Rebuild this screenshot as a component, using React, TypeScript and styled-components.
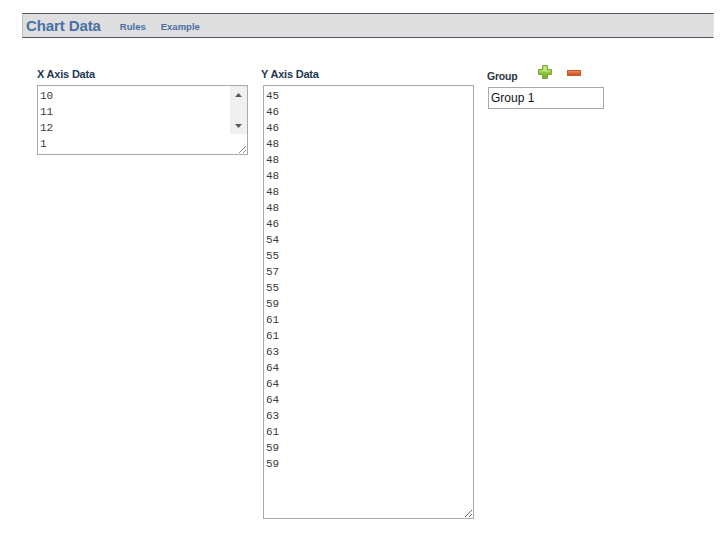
import React from "react";
import styled, { createGlobalStyle } from "styled-components";

const Global = createGlobalStyle`
  html, body { margin: 0; padding: 0; background: #ffffff; }
  body { font-family: "Liberation Sans", Arial, sans-serif; }
`;

const Page = styled.div`
  padding: 13px 6px 0 22px;
`;

const Header = styled.div`
  display: flex;
  align-items: center;
  height: 23px;
  background: #dedede;
  border-top: 1px solid #4b5a66;
  border-bottom: 1px solid #4b5a66;
  border-left: 1px solid #b7bec4;
  border-right: 1px solid #e6e6e6;
  padding-left: 3px;
`;

const Title = styled.span`
  font-size: 15px;
  font-weight: bold;
  color: #4a70a8;
  letter-spacing: -0.1px;
  margin-right: 19px;
`;

const NavLink = styled.a`
  font-size: 9.5px;
  font-weight: bold;
  color: #4a6ea6;
  text-decoration: none;
  margin-right: 15px;
  margin-top: 2px;
  cursor: pointer;
`;

const Columns = styled.div`
  display: flex;
  align-items: flex-start;
  padding-left: 15px;
  margin-top: 29px;
`;

const Column = styled.div<{ $width: number; $shift?: number }>`
  display: flex;
  flex-direction: column;
  width: ${(p) => p.$width}px;
  margin-top: ${(p) => p.$shift ?? 0}px;
`;

const Label = styled.div`
  font-size: 11px;
  font-weight: bold;
  color: #1e3853;
  line-height: 14px;
  height: 14px;
  margin-bottom: 4px;
  letter-spacing: -0.2px;
`;

const DataArea = styled.textarea<{ $height: number; $indent?: number }>`
  box-sizing: border-box;
  width: 211px;
  height: ${(p) => p.$height}px;
  margin: 0 0 0 ${(p) => p.$indent ?? 0}px;
  padding: 2px 2px;
  border: 1px solid #a9a9a9;
  font-family: "Liberation Mono", "Courier New", monospace;
  font-size: 11px;
  line-height: 16px;
  color: #3a3a3a;
  overflow-y: auto;
  resize: both;
  outline: none;
  background: #ffffff;
`;

/* framed textarea with a classic scrollbar rail drawn beside it */
const ScrollFrame = styled.div<{ $height: number }>`
  box-sizing: border-box;
  display: flex;
  width: 211px;
  height: ${(p) => p.$height}px;
  border: 1px solid #a9a9a9;
  background: #ffffff;
`;

const FrameText = styled.textarea`
  flex: 1;
  min-width: 0;
  box-sizing: border-box;
  margin: 0;
  padding: 2px 2px;
  border: 0;
  font-family: "Liberation Mono", "Courier New", monospace;
  font-size: 11px;
  line-height: 16px;
  color: #3a3a3a;
  overflow: hidden;
  resize: none;
  outline: none;
  background: transparent;
`;

const Rail = styled.div`
  display: flex;
  flex-direction: column;
  width: 17px;
`;

const RailButton = styled.div`
  display: flex;
  align-items: center;
  justify-content: center;
  height: 17px;
  background: #f0f0f0;
`;

const RailTrack = styled.div`
  height: 14px;
  background: #f0f0f0;
`;

const RailCorner = styled.div`
  flex: 1;
  display: flex;
  align-items: flex-end;
  justify-content: flex-end;
  background: #ffffff;
  padding: 0 1px 1px 0;
`;

const GroupHead = styled.div`
  display: flex;
  align-items: flex-start;
  height: 20px;
`;

const GroupLabel = styled.div`
  font-size: 10.5px;
  font-weight: bold;
  color: #2b3440;
  line-height: 14px;
  margin-top: 4px;
  letter-spacing: -0.2px;
`;

const IconButton = styled.button<{ $left: number; $top: number }>`
  display: block;
  padding: 0;
  border: 0;
  background: transparent;
  margin-left: ${(p) => p.$left}px;
  margin-top: ${(p) => p.$top}px;
  line-height: 0;
  cursor: pointer;
`;

const GroupInput = styled.input`
  box-sizing: border-box;
  width: 116px;
  height: 22px;
  margin: 2px 0 0 1px;
  padding: 0 2px;
  border: 1px solid #a9a9a9;
  font-family: "Liberation Sans", Arial, sans-serif;
  font-size: 12px;
  color: #111111;
  outline: none;
`;

const Arrow = ({ up }: { up?: boolean }) => (
  <svg width="7" height="4" viewBox="0 0 7 4">
    <path d={up ? "M0 4 L3.5 0 L7 4 Z" : "M0 0 L3.5 4 L7 0 Z"} fill="#5a5a5a" />
  </svg>
);

const Grip = () => (
  <svg width="8" height="8" viewBox="0 0 8 8">
    <path d="M8 1 L1 8 M8 5 L5 8" stroke="#8a8a8a" strokeWidth="1" />
  </svg>
);

const PlusIcon = () => (
  <svg width="14" height="14" viewBox="0 0 14 14">
    <defs>
      <linearGradient id="pg" x1="0" y1="0" x2="0" y2="1">
        <stop offset="0" stopColor="#b6e05a" />
        <stop offset="1" stopColor="#6fae2a" />
      </linearGradient>
    </defs>
    <path
      d="M4.5 0.5 H9.5 V4.5 H13.5 V9.5 H9.5 V13.5 H4.5 V9.5 H0.5 V4.5 H4.5 Z"
      fill="url(#pg)"
      stroke="#7aa83a"
      strokeWidth="1"
    />
    <path d="M5.5 1.5 H8.5 V5.5 H12.5 V6.5 H1.5 V5.5 H5.5 Z" fill="#d4f08c" opacity="0.7" />
  </svg>
);

const MinusIcon = () => (
  <svg width="14" height="6" viewBox="0 0 14 6">
    <defs>
      <linearGradient id="mg" x1="0" y1="0" x2="0" y2="1">
        <stop offset="0" stopColor="#f08a5a" />
        <stop offset="1" stopColor="#cc4a1c" />
      </linearGradient>
    </defs>
    <rect x="0.5" y="0.5" width="13" height="5" fill="url(#mg)" stroke="#c85a30" strokeWidth="1" />
  </svg>
);

const xData = ["10", "11", "12", "1"];
const yData = [
  45, 46, 46, 48, 48, 48, 48, 48, 46, 54, 55, 57, 55, 59, 61, 61, 63, 64, 64, 64, 63, 61, 59, 59,
];

export default function App() {
  return (
    <>
      <Global />
      <Page>
        <Header>
          <Title>Chart Data</Title>
          <NavLink>Rules</NavLink>
          <NavLink>Example</NavLink>
        </Header>
        <Columns>
          <Column $width={224}>
            <Label>X Axis Data</Label>
            <ScrollFrame $height={70}>
              <FrameText defaultValue={xData.join("\n")} />
              <Rail>
                <RailButton>
                  <Arrow up />
                </RailButton>
                <RailTrack />
                <RailButton>
                  <Arrow />
                </RailButton>
                <RailCorner>
                  <Grip />
                </RailCorner>
              </Rail>
            </ScrollFrame>
          </Column>
          <Column $width={226}>
            <Label>Y Axis Data</Label>
            <DataArea $height={434} $indent={2} defaultValue={yData.join("\n")} />
          </Column>
          <Column $width={140} $shift={-2}>
            <GroupHead>
              <GroupLabel>Group</GroupLabel>
              <IconButton $left={20} $top={0} aria-label="Add group">
                <PlusIcon />
              </IconButton>
              <IconButton $left={15} $top={5} aria-label="Remove group">
                <MinusIcon />
              </IconButton>
            </GroupHead>
            <GroupInput defaultValue="Group 1" />
          </Column>
        </Columns>
      </Page>
    </>
  );
}
